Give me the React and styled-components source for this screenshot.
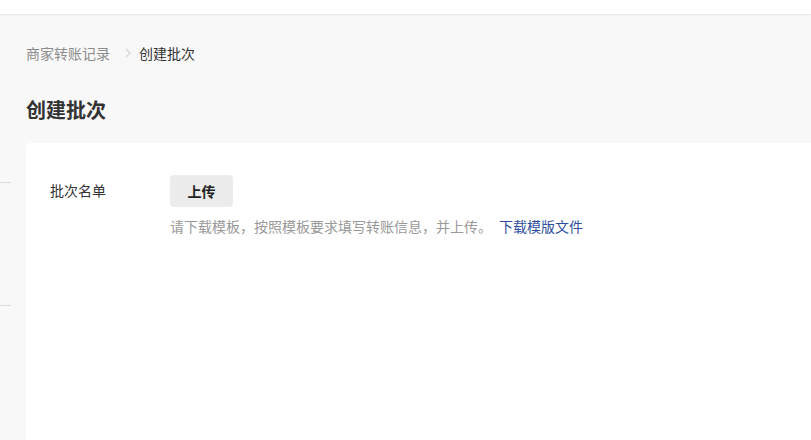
import React from 'react';
import styled, { createGlobalStyle } from 'styled-components';

const GlobalStyle = createGlobalStyle`
  html, body {
    margin: 0;
    padding: 0;
    height: 100%;
    background: #f8f8f8;
    font-family: "Noto Sans CJK SC", "Noto Sans", sans-serif;
    color: #333;
  }
  #root {
    height: 100%;
  }
`;

function App() {
  return (
    <Page>
      <GlobalStyle />
      <TopBar />
      <Body>
        <Breadcrumb>
          <Crumb>商家转账记录</Crumb>
          <Chevron viewBox="0 0 8 12">
            <path d="M2 2l4 4-4 4" fill="none" stroke="#d6d6d6" strokeWidth="1.2" />
          </Chevron>
          <Crumb current>创建批次</Crumb>
        </Breadcrumb>
        <Title>创建批次</Title>
        <Main>
          <Gutter>
            <GutterLine top={39} />
            <GutterLine top={162} />
          </Gutter>
          <Card>
            <FormRow>
              <Label>批次名单</Label>
              <Field>
                <UploadButton type="button">上传</UploadButton>
                <Hint>
                  请下载模板，按照模板要求填写转账信息，并上传。
                  <Link href="#">下载模版文件</Link>
                </Hint>
              </Field>
            </FormRow>
          </Card>
        </Main>
      </Body>
    </Page>
  );
}

const Page = styled.div`
  display: flex;
  flex-direction: column;
  min-height: 440px;
`;

const TopBar = styled.div`
  height: 14px;
  background: #fff;
  border-bottom: 1px solid #ececec;
  box-shadow: 0 1px 2px rgba(0, 0, 0, 0.03);
`;

const Body = styled.div`
  flex: 1;
  display: flex;
  flex-direction: column;
`;

const Breadcrumb = styled.div`
  display: flex;
  align-items: center;
  height: 20px;
  margin: 28px 0 0 26px;
  font-size: 14px;
  line-height: 20px;
`;

const Crumb = styled.span`
  color: ${p => (p.current ? '#333' : '#8c8c8c')};
`;

const Chevron = styled.svg`
  width: 8px;
  height: 12px;
  margin: 0 7px 0 14px;
`;

const Title = styled.h1`
  margin: 33px 0 0 26px;
  font-size: 20px;
  line-height: 28px;
  font-weight: 700;
  color: #333;
`;

const Main = styled.div`
  flex: 1;
  display: flex;
  margin-top: 19px;
`;

const Gutter = styled.div`
  position: relative;
  width: 26px;
  flex-shrink: 0;
`;

const GutterLine = styled.div`
  position: absolute;
  left: 0;
  top: ${p => p.top}px;
  width: 11px;
  height: 1px;
  background: #dcdcdc;
`;

const Card = styled.div`
  flex: 1;
  background: #fff;
  border-radius: 4px 0 0 0;
  padding: 32px 24px;
`;

const FormRow = styled.div`
  display: flex;
  align-items: flex-start;
`;

const Label = styled.div`
  width: 120px;
  flex-shrink: 0;
  font-size: 14px;
  line-height: 31px;
  color: #333;
`;

const Field = styled.div`
  display: flex;
  flex-direction: column;
  align-items: flex-start;
`;

const UploadButton = styled.button`
  width: 63px;
  height: 32px;
  border: none;
  border-radius: 4px;
  background: #ececec;
  color: #222;
  font-family: inherit;
  font-size: 14px;
  font-weight: 600;
  padding: 0;
  cursor: pointer;
`;

const Hint = styled.div`
  margin-top: 9px;
  font-size: 14px;
  line-height: 20px;
  color: #999;
`;

const Link = styled.a`
  margin-left: 7px;
  color: #2f4f9e;
  text-decoration: none;
`;

export default App;
